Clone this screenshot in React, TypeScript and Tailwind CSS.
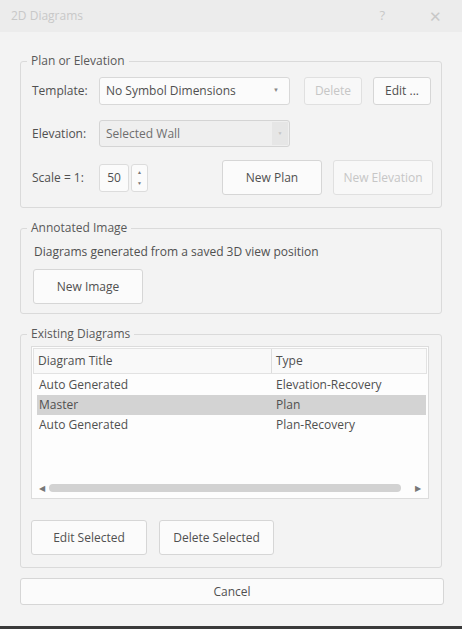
import React from 'react'

const btn =
  'flex items-center justify-center rounded-[3px] border border-[#d6d6d6] bg-[#fbfbfb] text-[12px] text-[#505050]'
const btnOff =
  'flex items-center justify-center rounded-[3px] border border-[#e0e0e0] bg-[#f8f8f8] text-[12px] text-[#c6c6c6]'

function Group({ title, className, children }: { title: string; className?: string; children: React.ReactNode }) {
  return (
    <fieldset className={`ml-[20px] w-[422px] rounded-[3px] border border-[#dadada] ${className ?? ''}`}>
      <legend className="ml-[6px] px-[4px] text-[12px] leading-[16px] text-[#595959]">{title}</legend>
      {children}
    </fieldset>
  )
}

const ROWS = [
  { title: 'Auto Generated', type: 'Elevation-Recovery' },
  { title: 'Master', type: 'Plan', selected: true },
  { title: 'Auto Generated', type: 'Plan-Recovery' },
]

export default function App() {
  return (
    <div
      className="flex h-[629px] w-[462px] flex-col bg-[#f3f3f3] text-[#505050]"
      style={{ fontFamily: '"Open Sans", "Noto Sans", sans-serif' }}
    >
      {/* title bar */}
      <div className="flex h-[32px] shrink-0 items-center bg-[#ececec] pl-[11px] pr-[20px] text-[12px] text-[#c8c8c8]">
        <span>2D Diagrams</span>
        <span className="ml-auto mr-[44px] text-[13px]">?</span>
        <span className="text-[15px]">✕</span>
      </div>

      {/* Plan or Elevation */}
      <Group title="Plan or Elevation" className="mt-[21px] pb-[12px]">
        <div className="mt-[7px] flex h-[29px] items-center pl-[11px]">
          <span className="w-[67px] text-[12px]">Template:</span>
          <div className="flex h-[28px] w-[191px] items-center rounded-[3px] border border-[#d8d8d8] bg-[#fbfbfb] pl-[6px] pr-[10px] text-[12px]">
            <span>No Symbol Dimensions</span>
            <span className="ml-auto text-[6px] text-[#888]">▼</span>
          </div>
          <div className={`${btnOff} ml-[14px] h-[28px] w-[58px]`}>Delete</div>
          <div className={`${btn} ml-[11px] h-[28px] w-[58px]`}>Edit ...</div>
        </div>
        <div className="mt-[15px] flex h-[27px] items-center pl-[11px]">
          <span className="w-[67px] text-[12px]">Elevation:</span>
          <div className="flex h-[27px] w-[191px] items-center rounded-[3px] border border-[#d4d4d4] bg-[#efefef] pl-[6px] text-[12px] text-[#6e6e6e]">
            <span>Selected Wall</span>
            <div className="ml-auto mr-[1px] flex h-[23px] w-[16px] items-center justify-center bg-[#e6e6e6] text-[5px] text-[#c4c4c4]">
              ▼
            </div>
          </div>
        </div>
        <div className="mt-[13px] flex h-[35px] items-center pl-[11px]">
          <span className="w-[67px] text-[12px]">Scale = 1:</span>
          <div className="flex h-[28px] w-[30px] items-center justify-center rounded-[3px] border border-[#dcdcdc] bg-[#fbfbfb] text-[12px]">
            50
          </div>
          <div className="ml-[2px] flex h-[28px] w-[17px] flex-col items-center justify-center gap-[6px] rounded-[3px] border border-[#dcdcdc] bg-[#fbfbfb] text-[5px] leading-[5px] text-[#777]">
            <span>▲</span>
            <span>▼</span>
          </div>
          <div className={`${btn} ml-[74px] h-[35px] w-[100px]`}>New Plan</div>
          <div className={`${btnOff} ml-[11px] h-[35px] w-[100px]`}>New Elevation</div>
        </div>
      </Group>

      {/* Annotated Image */}
      <Group title="Annotated Image" className="mt-[12px] pb-[9px]">
        <div className="mt-[8px] pl-[13px] text-[12px] leading-[16px]">Diagrams generated from a saved 3D view position</div>
        <div className={`${btn} ml-[12px] mt-[9px] h-[35px] w-[110px]`}>New Image</div>
      </Group>

      {/* Existing Diagrams */}
      <Group title="Existing Diagrams" className="mt-[12px] pb-[12px]">
        <div className="ml-[10px] mt-[4px] flex h-[153px] w-[398px] flex-col border border-[#dcdcdc] bg-[#fdfdfd] p-[1px]">
          <div className="flex h-[26px] shrink-0 border border-[#e2e2e2] bg-[#f9f9f9] text-[12px]">
            <div className="flex w-[238px] items-center border-r border-[#dcdcdc] pl-[4px]">Diagram Title</div>
            <div className="flex flex-1 items-center pl-[4px]">Type</div>
          </div>
          <div className="flex flex-col pt-[1px] text-[12px]">
            {ROWS.map((r, i) => (
              <div
                key={i}
                className={`ml-[4px] mr-[1px] flex h-[20px] items-center ${r.selected ? 'bg-[#d3d3d3]' : ''}`}
              >
                <span className="w-[239px] pl-[2px]">{r.title}</span>
                <span>{r.type}</span>
              </div>
            ))}
          </div>
          <div className="mt-auto mb-[2px] flex h-[14px] items-center px-[6px]">
            <span className="text-[8px] text-[#777]">◀</span>
            <div className="ml-[4px] h-[8px] w-[352px] rounded-full bg-[#d2d2d2]" />
            <span className="ml-auto text-[8px] text-[#777]">▶</span>
          </div>
        </div>
        <div className="mt-[21px] flex pl-[10px]">
          <div className={`${btn} h-[35px] w-[116px]`}>Edit Selected</div>
          <div className={`${btn} ml-[12px] h-[35px] w-[115px]`}>Delete Selected</div>
        </div>
      </Group>

      <div className={`${btn} ml-[20px] mt-[10px] h-[27px] w-[424px]`}>Cancel</div>

      <div className="mt-auto h-[3px] bg-[#3a3a3a]" />
    </div>
  )
}
